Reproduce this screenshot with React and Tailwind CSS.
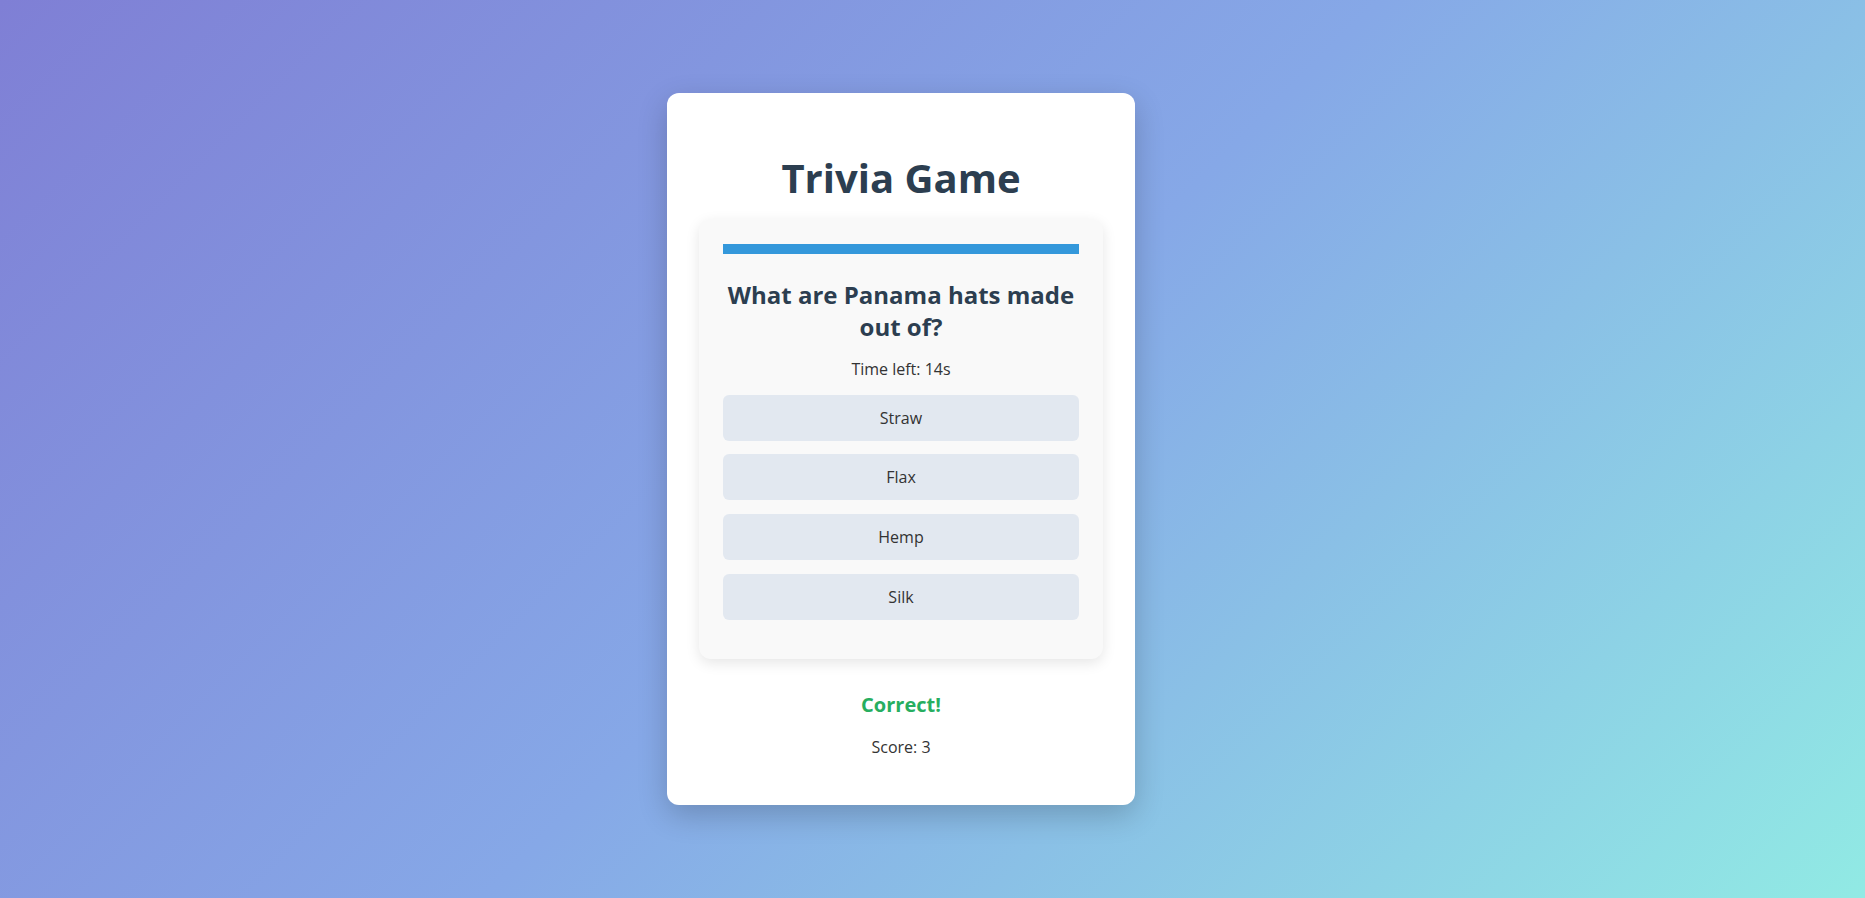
export default function App() {
  const options = ["Straw", "Flax", "Hemp", "Silk"];

  return (
    <div
      className="min-h-screen w-full flex items-center justify-center bg-[linear-gradient(135deg,#7f7fd5,#86a8e7,#91eae4)]"
      style={{ fontFamily: '"Open Sans", "Noto Sans", sans-serif' }}
    >
      {/* Main card */}
      <div className="w-[468px] mr-[63px] bg-white rounded-xl shadow-[0_10px_30px_rgba(0,0,0,0.2)] px-8 pt-8 pb-[46px] text-center">
        <h1 className="mt-[29px] mb-[17px] text-[40px] leading-[48px] font-bold text-[#2c3e50]">
          Trivia Game
        </h1>

        {/* Question panel */}
        <div className="bg-[#f9f9f9] rounded-xl shadow-[0_4px_14px_rgba(0,0,0,0.1)] px-6 pt-[25px] pb-[39px]">
          <div className="h-[10px] w-full bg-[#3498db]" />

          <h2 className="mt-[25px] text-2xl leading-8 font-bold text-[#2c3e50]">
            What are Panama hats made out of?
          </h2>

          <p className="mt-[14px] text-base leading-6 text-[#333]">Time left: 14s</p>

          <div className="mt-[14px] flex flex-col gap-[13.7px]">
            {options.map((opt) => (
              <button
                key={opt}
                className="h-[46px] w-full rounded-md bg-[#e2e8f0] text-base text-[#333]"
              >
                {opt}
              </button>
            ))}
          </div>
        </div>

        <p className="mt-8 text-xl leading-7 font-bold text-[#27ae60]">Correct!</p>
        <p className="mt-[16.5px] text-base leading-6 text-[#333]">Score: 3</p>
      </div>
    </div>
  );
}
